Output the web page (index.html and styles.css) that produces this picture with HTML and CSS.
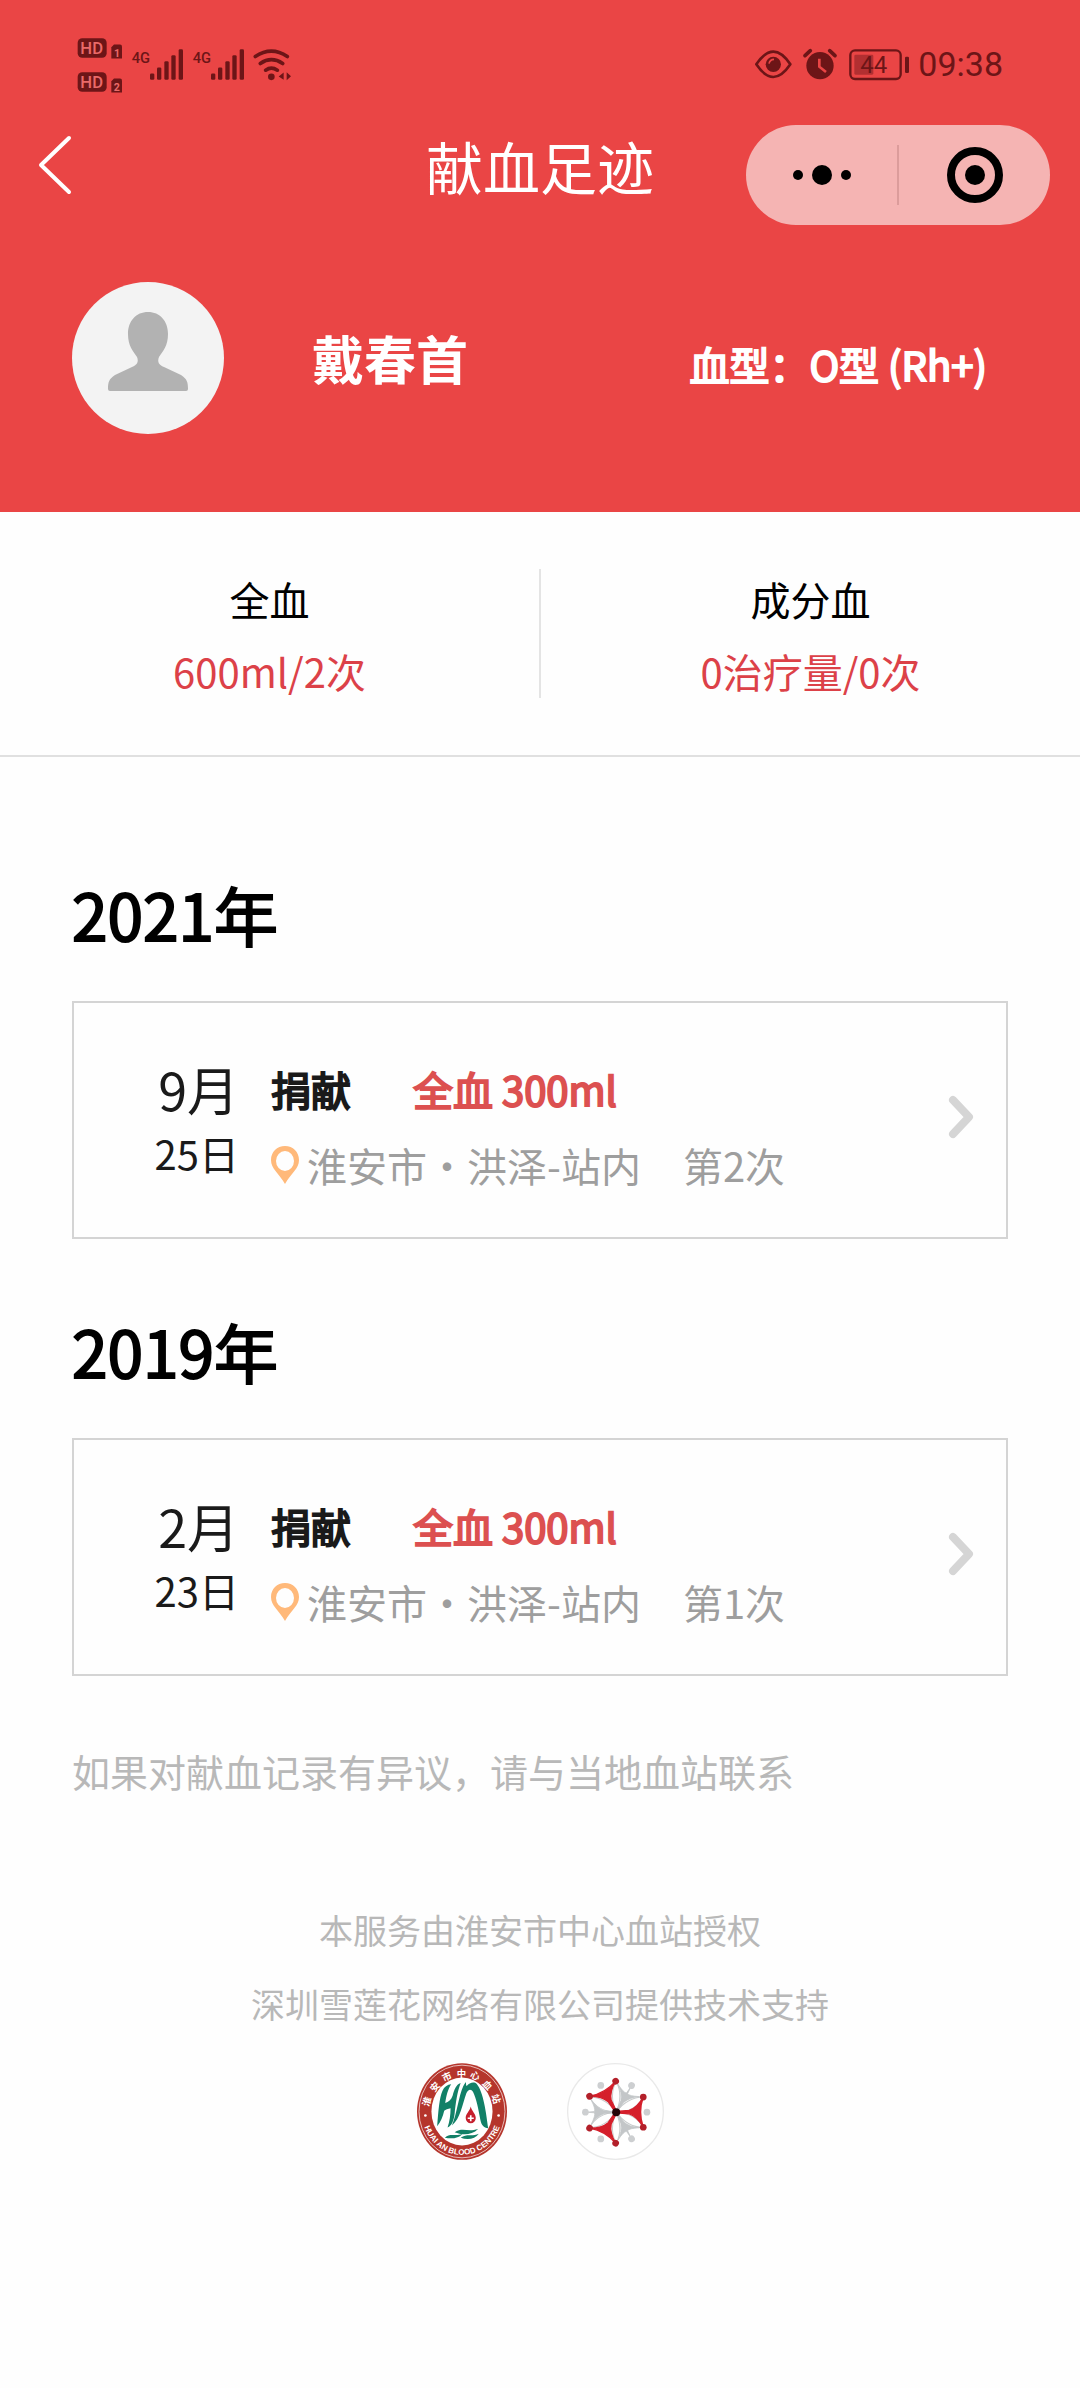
FILE: index.html
```html
<!DOCTYPE html>
<html lang="zh-CN">
<head>
  <meta charset="UTF-8">
  <meta name="viewport" content="width=device-width, initial-scale=1.0">
  <title>献血足迹</title>
  <link rel="stylesheet" href="styles.css">
</head>
<body>
  <header class="header">
    <div class="status-bar">
      <svg class="status-left" viewBox="50 50 645 170" aria-hidden="true">
        <g fill="#6d1517">
          <rect x="52" y="53" width="87" height="59" rx="14"/>
          <rect x="52" y="155" width="87" height="59" rx="14"/>
          <path d="M153 80l8-8h18q6 0 6 6v36h-32z"/>
          <path d="M153 182l8-8h18q6 0 6 6v36h-32z"/>
          <g id="signal">
            <text class="net" x="214" y="126">4G</text>
            <rect x="269" y="159" width="13" height="19" rx="4"/>
            <rect x="290" y="141" width="13" height="37" rx="4"/>
            <rect x="312" y="122" width="13" height="56" rx="4"/>
            <rect x="333" y="104" width="13" height="74" rx="4"/>
            <rect x="355" y="86" width="13" height="92" rx="4"/>
          </g>
          <use href="#signal" x="183"/>
          <circle cx="633" cy="169" r="10"/>
          <path d="M670 156v22l-15-10zM679 155v24l13-12z"/>
        </g>
        <g fill="none" stroke="#6d1517" stroke-width="11" stroke-linecap="round">
          <path d="M585 108q48-32 96 0M600 129q33-23 67 0M616 149q17-12 35 0"/>
        </g>
        <g fill="#ea6a69">
          <text class="hd" x="60" y="101">HD</text>
          <text class="hd" x="60" y="203">HD</text>
          <text class="sim" x="161" y="109">1</text>
          <text class="sim" x="160" y="211">2</text>
        </g>
      </svg>
      <div class="status-right">
        <svg class="status-icons" viewBox="75 80 465 105" aria-hidden="true">
          <path d="M79 132q51-76 102 0q-51 76-102 0z" fill="none" stroke="#6d1517" stroke-width="8" stroke-linejoin="round"/>
          <circle cx="130" cy="132" r="23" fill="#6d1517"/>
          <path d="M117 130q3-13 15-13" fill="none" stroke="#ea4545" stroke-width="5"/>
          <circle cx="270" cy="136" r="41" fill="#6d1517"/>
          <path d="M225 106l16-15M315 106l-16-15" stroke="#6d1517" stroke-width="11" stroke-linecap="round"/>
          <path d="M268 115v24l20 16" fill="none" stroke="#ea4545" stroke-width="8"/>
          <rect x="361" y="90" width="151" height="86" rx="14" fill="none" stroke="#6d1517" stroke-width="7"/>
          <rect x="373" y="103" width="57" height="60" rx="4" fill="#b22f31"/>
          <rect x="525" y="109" width="12" height="49" rx="4" fill="#6d1517"/>
          <text class="battery" x="391" y="158">44</text>
        </svg>
        <time class="clock">09:38</time>
      </div>
    </div>

    <nav class="nav">
      <button class="back" type="button" aria-label="返回">
        <svg width="34" height="60" viewBox="0 0 34 60"><path d="M31 3L3 30l28 27" fill="none" stroke="#fff" stroke-width="4" stroke-linecap="round" stroke-linejoin="round"/></svg>
      </button>
      <h1 class="title">献血足迹</h1>
      <div class="capsule">
        <button class="capsule-btn" type="button" aria-label="更多">
          <svg width="60" height="24" viewBox="0 0 60 24"><circle cx="6" cy="12" r="5"/><circle cx="30" cy="12" r="10"/><circle cx="54" cy="12" r="5"/></svg>
        </button>
        <button class="capsule-btn" type="button" aria-label="关闭">
          <svg width="56" height="56" viewBox="0 0 56 56"><circle cx="28" cy="28" r="24" fill="none" stroke="#000" stroke-width="8"/><circle cx="28" cy="28" r="10"/></svg>
        </button>
      </div>
    </nav>

    <div class="profile">
      <svg class="avatar" viewBox="0 0 152 152" aria-hidden="true">
        <circle cx="76" cy="76" r="76" fill="#f3f3f3"/>
        <path d="M76 30c12 0 20 9 20 22c0 12-5 17-9 23c-2 5 0 8 5 10l17 8c6 4 7 7 7 14q0 2-2 2H38q-2 0-2-2c0-7 1-10 7-14l17-8c5-2 7-5 5-10c-4-6-9-11-9-23c0-13 8-22 20-22z" fill="#b2b2b2"/>
      </svg>
      <span class="name">戴春首</span>
      <span class="blood-type">血型：O型 (Rh+)</span>
    </div>
  </header>

  <section class="stats">
    <div class="stat">
      <span>全血</span>
      <span class="stat-value">600ml/2次</span>
    </div>
    <div class="stat">
      <span>成分血</span>
      <span class="stat-value">0治疗量/0次</span>
    </div>
  </section>

  <main class="records">
    <h2 class="year">2021年</h2>
    <a class="card" href="#">
      <div class="date">
        <span class="month">9月</span>
        <span>25日</span>
      </div>
      <div class="detail">
        <div class="donation"><span>捐献</span><span class="amount">全血 300ml</span></div>
        <div class="place">
          <svg class="pin" viewBox="0 0 28 38"><path d="M14 0C6 0 0 6 0 14c0 9 8 13 14 24c6-11 14-15 14-24C28 6 22 0 14 0zm0 5a9 10 0 0 1 0 20a9 10 0 0 1 0-20z" fill="#ffb97a"/></svg>
          <span>淮安市・洪泽-站内</span>
          <span class="times">第2次</span>
        </div>
      </div>
      <svg class="arrow" viewBox="0 0 26 44"><path d="M5 5l16 17L5 39" fill="none" stroke="#d5d5d5" stroke-width="8" stroke-linecap="round" stroke-linejoin="round"/></svg>
    </a>

    <h2 class="year">2019年</h2>
    <a class="card" href="#">
      <div class="date">
        <span class="month">2月</span>
        <span>23日</span>
      </div>
      <div class="detail">
        <div class="donation"><span>捐献</span><span class="amount">全血 300ml</span></div>
        <div class="place">
          <svg class="pin" viewBox="0 0 28 38"><path d="M14 0C6 0 0 6 0 14c0 9 8 13 14 24c6-11 14-15 14-24C28 6 22 0 14 0zm0 5a9 10 0 0 1 0 20a9 10 0 0 1 0-20z" fill="#ffb97a"/></svg>
          <span>淮安市・洪泽-站内</span>
          <span class="times">第1次</span>
        </div>
      </div>
      <svg class="arrow" viewBox="0 0 26 44"><path d="M5 5l16 17L5 39" fill="none" stroke="#d5d5d5" stroke-width="8" stroke-linecap="round" stroke-linejoin="round"/></svg>
    </a>

    <p class="note">如果对献血记录有异议，请与当地血站联系</p>
  </main>

  <footer class="footer">
    <p>本服务由淮安市中心血站授权</p>
    <p>深圳雪莲花网络有限公司提供技术支持</p>
    <div class="logos">
      <!-- blood centre seal -->
      <svg class="seal" viewBox="0 0 268 288">
        <ellipse cx="134" cy="144" rx="134" ry="144" fill="#b5352c"/>
        <ellipse cx="134" cy="144" rx="128" ry="138" fill="none" stroke="#fff" stroke-width="2"/>
        <ellipse cx="134" cy="144" rx="91" ry="101" fill="#fff"/>
        <g class="seal-cn">
          <text transform="translate(28 114) rotate(-73)">淮</text>
          <text transform="translate(52 70) rotate(-49)">安</text>
          <text transform="translate(88 39) rotate(-25)">市</text>
          <text transform="translate(132 29)">中</text>
          <text transform="translate(174 36) rotate(23)">心</text>
          <text transform="translate(211 64) rotate(47)">血</text>
          <text transform="translate(237 106) rotate(71)">站</text>
        </g>
        <circle cx="25" cy="156" r="4" fill="#fff"/>
        <circle cx="243" cy="156" r="4" fill="#fff"/>
        <path id="seal-arc" d="M14 144A120 129 0 0 0 254 144" fill="none"/>
        <text class="seal-en"><textPath href="#seal-arc" startOffset="50%">HUAI AN BLOOD CENTRE</textPath></text>
        <path d="M60 188C64 140 66 105 76 82c5-11 14-18 26-19c-10 14-15 35-18 56c10-3 18-10 22-22c5-18 10-33 24-38c-10 26-15 60-18 92c-3 22-8 35-21 41c6-18 9-38 9-58c-8 2-15 4-19 8c-4 18-10 33-21 46z" fill="#128067"/>
        <path d="M104 186c16-40 20-88 34-118c4-8 8-12 8-12c0 8 0 10 2 12c8-10 22-14 30-6c20 24 28 86 34 132c-14-2-20-10-23-24c-6-32-12-64-22-84c-6-10-14-10-20 4c-12 32-18 76-43 96z" fill="#128067"/>
        <path d="M160 129c3 14 15 22 15 34a15 16 0 0 1-30 0c0-12 12-20 15-34z" fill="#c51f2d"/>
        <path d="M160 155v18M151 164h18" stroke="#fff" stroke-width="5"/>
        <path d="M83 222c16-16 32-2 52-12c-10 14-32 16-52 12zM112 206c24-16 38 0 70-10c-18 18-46 20-70 10zM130 222c18-14 34-2 54-12c-10 16-34 20-54 12z" fill="#128067"/>
      </svg>
      <!-- snow lotus -->
      <svg class="lotus" viewBox="0 0 290 290">
        <circle cx="145" cy="145" r="143" fill="#fff" stroke="#e9e9e9" stroke-width="4"/>
        <path d="M147 147Q125 95 147 55Q169 95 147 147M147 147Q125 200 147 240Q169 200 147 147M147 147Q115 103 68 102Q90 145 147 147M147 147Q180 103 228 102Q205 145 147 147M147 147Q90 150 68 193Q115 192 147 147M147 147Q205 150 228 193Q180 192 147 147" fill="none" stroke="#c9cccd" stroke-width="3"/>
        <g id="grey-arm" transform="rotate(60 147 147)">
          <path d="M147 146L184 142Q206 134 222 110Q208 138 212 145L236 147L212 149Q208 156 222 184Q206 160 184 152L147 148z" fill="#c3c6c8" stroke="#c3c6c8" stroke-width="2" stroke-linejoin="round"/>
          <circle cx="239" cy="147" r="10" fill="#cdcfd1"/>
        </g>
        <use href="#grey-arm" transform="rotate(120 147 147)"/>
        <use href="#grey-arm" transform="rotate(240 147 147)"/>
        <circle cx="239" cy="147" r="10" fill="#cdcfd1"/>
        <circle cx="101" cy="67" r="10" fill="#cdcfd1"/>
        <circle cx="101" cy="227" r="10" fill="#cdcfd1"/>
        <g id="red-arm">
          <path d="M147 145L186 142Q210 134 228 102Q212 147 228 192Q210 160 186 152L147 149z" fill="#d51f2b" stroke="#d51f2b" stroke-width="4" stroke-linejoin="round"/>
          <circle cx="228" cy="102" r="10" fill="#b3202a"/>
          <circle cx="228" cy="192" r="10" fill="#b3202a"/>
        </g>
        <use href="#red-arm" transform="rotate(120 147 147)"/>
        <use href="#red-arm" transform="rotate(240 147 147)"/>
        <circle cx="147" cy="147" r="12" fill="#250508"/>
      </svg>
    </div>
  </footer>
</body>
</html>
```
FILE: styles.css
```css
* {
  box-sizing: border-box;
}
body {
  margin: 0;
  background: #fefefe;
  color: #000;
  font-family: "Noto Sans CJK SC", sans-serif;
  font-size: 40px;
  line-height: 64px;
}
h1, h2, p {
  margin: 0;
}
button {
  border: none;
  background: none;
  padding: 0;
  cursor: pointer;
}
svg {
  display: block;
  flex: none;
}

.header {
  background: #ea4545;
  color: #fff;
  padding-bottom: 78px;
}
.status-bar {
  display: flex;
  justify-content: space-between;
  align-items: flex-start;
  height: 125px;
  padding: 6px 77px 0;
}
.status-left {
  width: 215px;
  height: 57px;
  margin-top: 31px;
}
.status-right {
  display: flex;
  align-items: center;
  gap: 8px;
  margin-top: 26px;
}
.status-icons {
  width: 155px;
  height: 35px;
}
.clock {
  font-family: Roboto, sans-serif;
  font-size: 34px;
  color: #6d1517;
}
.net {
  font: 500 44px Roboto, sans-serif;
}
.hd {
  font: 500 50px Roboto, sans-serif;
}
.sim {
  font: bold 32px Roboto, sans-serif;
}
.battery {
  font: 400 72px Roboto, sans-serif;
  fill: #6d1517;
}

.nav {
  display: grid;
  grid-template-columns: 1fr auto 1fr;
  align-items: start;
  padding: 0 30px;
}
.back {
  display: flex;
  align-items: center;
  height: 80px;
  padding-left: 8px;
}
.title {
  font-size: 57px;
  font-weight: 400;
  line-height: 80px;
}
.capsule {
  justify-self: end;
  display: flex;
  align-items: center;
  width: 304px;
  height: 100px;
  border-radius: 50px;
  background: #f5b4b3;
}
.capsule-btn {
  flex: 1;
  display: flex;
  justify-content: center;
  align-items: center;
  height: 60px;
}
.capsule-btn + .capsule-btn {
  border-left: 2px solid #dc9c9b;
}

.profile {
  display: flex;
  align-items: center;
  padding: 57px 93px 0 72px;
}
.avatar {
  width: 152px;
  height: 152px;
}
.name {
  margin-left: 88px;
  font-size: 52px;
  font-weight: 700;
}
.blood-type {
  margin-left: auto;
  padding-top: 12px;
}
/* regular digits with a thicker stem */
.blood-type, .donation, .year {
  font-weight: 400;
  -webkit-text-stroke: 2px currentColor;
}

.stats {
  display: flex;
  padding: 57px 0;
  border-bottom: 2px solid #e0e0e0;
}
.stat {
  flex: 1;
  display: flex;
  flex-direction: column;
  align-items: center;
  gap: 12px;
  height: 129px;
  line-height: 60px;
}
.stat + .stat {
  border-left: 2px solid #e4e4e4;
}
.stat-value {
  color: #dc4148;
}

.records {
  padding: 84px 72px 0;
}
.year {
  font-size: 64px;
  line-height: 96px;
  padding: 24px 0 40px;
}
.card {
  display: flex;
  padding: 54px 32px 40px 0;
  border: 2px solid #d4d4d4;
  color: #1a1a1a;
  text-decoration: none;
  margin-bottom: 39px;
}
.date {
  display: flex;
  flex-direction: column;
  align-items: flex-end;
  width: 165px;
  margin-right: 32px;
}
.month {
  font-size: 52px;
}
.detail {
  flex: 1;
}
.donation {
  display: flex;
  gap: 62px;
  margin-bottom: 12px;
}
.amount {
  color: #dc5050;
}
.place {
  display: flex;
  align-items: center;
  color: #9e9e9e;
}
.pin {
  width: 28px;
  height: 38px;
  margin-right: 8px;
}
.times {
  margin-left: 42px;
}
.arrow {
  width: 26px;
  height: 44px;
  align-self: center;
  margin-bottom: 20px;
}
.note {
  padding-top: 24px;
  font-size: 38px;
  color: #b8b8b8;
}

.footer {
  padding-top: 90px;
  text-align: center;
  font-size: 34px;
  line-height: 74px;
  color: #b8b8b8;
}
.logos {
  display: flex;
  justify-content: center;
  align-items: center;
  gap: 60px;
  padding: 22px 0 120px;
}
.seal {
  width: 90px;
  height: 97px;
}
.lotus {
  width: 97px;
  height: 97px;
}
.seal-cn {
  font-size: 28px;
  font-weight: bold;
  fill: #fff;
  text-anchor: middle;
  dominant-baseline: central;
}
.seal-en {
  font: bold 24px "Liberation Sans", sans-serif;
  fill: #fff;
  text-anchor: middle;
}
```
